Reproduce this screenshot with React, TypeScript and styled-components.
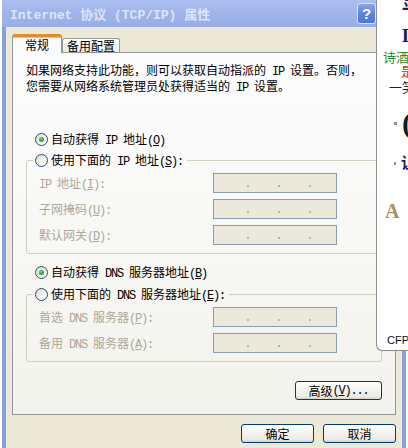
import React from 'react';
import styled, { createGlobalStyle, css } from 'styled-components';

const GlobalStyle = createGlobalStyle`
  html, body { margin: 0; padding: 0; background: #fff; }
  body {
    font-family: "Noto Sans CJK SC", "Noto Sans", sans-serif;
    font-size: 12px;
    color: #000;
  }
  * { box-sizing: border-box; }
`;

const Screen = styled.div`
  position: relative;
  width: 408px;
  height: 448px;
  overflow: hidden;
  padding-left: 2px;
  background: #fff;
`;

const Dialog = styled.div`
  width: 404px;
  display: flex;
  flex-direction: column;
`;

const TitleBar = styled.div`
  height: 27px;
  display: flex;
  align-items: center;
  padding: 0 5px 0 8px;
  background: linear-gradient(180deg, #abc0f0 0%, #9fb5ea 45%, #98aee6 100%);
`;

const Title = styled.span`
  flex: 1;
  font: bold 13px "Liberation Mono", "Noto Sans CJK SC", monospace;
  color: #dbe4f9;
  white-space: nowrap;
`;

const CapButton = styled.span<{ $w: number }>`
  width: ${p => p.$w}px;
  height: 21px;
  margin-left: 4px;
  border: 1px solid #dbe4f8;
  border-radius: 3px;
  background: linear-gradient(180deg, #86a5ea 0%, #5b82dc 55%, #4f76d6 100%);
  color: #fff;
  font: bold 15px "Liberation Sans", sans-serif;
  display: flex;
  align-items: center;
  justify-content: center;
`;

const Frame = styled.div`
  background: #ece9d8;
  border: 4px solid #8a9edb;
  border-top: none;
  padding: 7px 6px 5px;
`;

const TabRow = styled.div`
  position: relative;
  z-index: 1;
  display: flex;
  align-items: flex-end;
  height: 19px;
  margin-bottom: -1px;
`;

const Tab = styled.div<{ $active?: boolean }>`
  display: flex;
  align-items: center;
  justify-content: center;
  border: 1px solid #919b9c;
  border-bottom: none;
  border-radius: 3px 3px 0 0;
  white-space: nowrap;
  ${p => p.$active
    ? css`
      width: 50px;
      height: 19px;
      padding-bottom: 2px;
      background: #fcfcfe;
      border-top: 3px solid #e68b2c;
      box-shadow: inset 0 1px 0 #ffc83c;
    `
    : css`
      width: 58px;
      height: 14px;
      margin-bottom: 1px;
      background: linear-gradient(180deg, #ffffff 0%, #f3f3ef 60%, #ecebe5 100%);
    `}
`;

const Page = styled.div`
  display: flex;
  flex-direction: column;
  border: 1px solid #919b9c;
  background: linear-gradient(180deg, #fcfcfe 0%, #f8f8f5 50%, #f3f2ec 100%);
  padding: 10px 13px 14px;
`;

const Intro = styled.p`
  margin: 0;
  line-height: 14px;
  white-space: nowrap;
`;

const L = styled.span`
  font-family: "Liberation Mono", monospace;
  font-size: 12px;
  letter-spacing: -1.2px;
`;

const Key = styled.span`
  text-decoration: underline;
`;

const RadioRow = styled.div<{ $mt: number }>`
  display: flex;
  align-items: center;
  height: 16px;
  margin: ${p => p.$mt}px 0 0 9px;
  white-space: nowrap;
`;

const RadioMark = styled.span<{ $on?: boolean }>`
  position: relative;
  flex: none;
  width: 13px;
  height: 13px;
  margin-right: 3px;
  border-radius: 50%;
  border: 1px solid #1c5180;
  background: linear-gradient(135deg, #d8d8d2 0%, #f4f4f1 55%, #ffffff 100%);
  ${p => p.$on && css`
    &::after {
      content: '';
      position: absolute;
      left: 3px;
      top: 3px;
      width: 5px;
      height: 5px;
      border-radius: 50%;
      background: radial-gradient(circle at 40% 35%, #62db5e 0%, #21a121 65%, #1a8a1a 100%);
    }
  `}
`;

const RadioText = styled.span`
  white-space: pre;
`;

const Group = styled.fieldset<{ $mt: number }>`
  margin: ${p => p.$mt}px 0 0;
  padding: 0;
  min-width: 0;
  border: 1px solid #d0d0bf;
  border-radius: 3px;
`;

const Legend = styled.legend`
  display: flex;
  align-items: center;
  height: 16px;
  margin-left: 6px;
  padding: 0 4px 0 2px;
  white-space: nowrap;
`;

const Rows = styled.div`
  display: flex;
  flex-direction: column;
  gap: 6px;
  padding: 5px 12px 8px;
`;

const Row = styled.div`
  display: flex;
  align-items: center;
  height: 20px;
`;

const FieldLabel = styled.span`
  width: 174px;
  color: #aca899;
  white-space: pre;
`;

const IpField = styled.div`
  display: flex;
  align-items: center;
  gap: 29px;
  width: 124px;
  height: 20px;
  padding-left: 33px;
  border: 1px solid #8d9db1;
  background: #ece9dc;
`;

const IpDot = styled.span`
  width: 2px;
  height: 2px;
  margin-top: 5px;
  background: #b9b6aa;
`;

const Button = styled.button<{ $w: number }>`
  width: ${p => p.$w}px;
  height: 19px;
  padding: 0;
  border: 1px solid #003c74;
  border-radius: 3px;
  background: linear-gradient(180deg, #ffffff 0%, #f5f5f1 40%, #ecebe6 85%, #d6d0c5 100%);
  font: 12px "Noto Sans CJK SC", sans-serif;
  color: #000;
  display: flex;
  align-items: center;
  justify-content: center;
  white-space: nowrap;
`;

const AdvancedBar = styled.div`
  display: flex;
  justify-content: flex-end;
  margin-top: 19px;
`;

const Footer = styled.div`
  display: flex;
  justify-content: flex-end;
  gap: 9px;
  margin-top: 9px;
`;

/* web page window lying over the right edge of the dialog */
const Behind = styled.div`
  position: absolute;
  left: 376px;
  top: 0;
  width: 40px;
  height: 351px;
  overflow: hidden;
  background: #fff;
  border-left: 1px solid #8c8c8c;
  border-bottom: 1px solid #8c8c8c;
  border-bottom-left-radius: 6px;
`;

const Frag = styled.div<{ $mt: number; $ml: number }>`
  display: flex;
  align-items: center;
  margin: ${p => p.$mt}px 0 0 ${p => p.$ml}px;
  white-space: nowrap;
`;

const Headline = styled.span<{ $size: number }>`
  font: bold ${p => p.$size}px "Liberation Serif", "Noto Sans CJK SC", serif;
  line-height: ${p => p.$size}px;
  color: #1b1a6a;
`;

const Tagline = styled.span<{ $color: string }>`
  font-size: 13px;
  line-height: 13px;
  color: ${p => p.$color};
`;

const BulletDot = styled.span`
  width: 3px;
  height: 3px;
  margin-right: 5px;
  background: #8f8f8f;
`;

const Paren = styled.span`
  font: bold 30px "Liberation Serif", serif;
  line-height: 34px;
  color: #1a1a1a;
`;

const InitialA = styled.span`
  font: bold 20px "Liberation Serif", serif;
  line-height: 20px;
  color: #a89062;
`;

const Caption = styled.span`
  font: 11px "Liberation Sans", sans-serif;
  line-height: 12px;
  color: #111;
`;

const Radio = ({ on, children }: { on?: boolean; children: React.ReactNode }) => (
  <>
    <RadioMark $on={on} />
    <RadioText>{children}</RadioText>
  </>
);

const IpBox = () => (
  <IpField>
    <IpDot />
    <IpDot />
    <IpDot />
  </IpField>
);

export default function App() {
  return (
    <>
      <GlobalStyle />
      <Screen>
        <Dialog>
          <TitleBar>
            <Title>Internet 协议 (TCP/IP) 属性</Title>
            <CapButton $w={19}>?</CapButton>
            <CapButton $w={21}>×</CapButton>
          </TitleBar>
          <Frame>
            <TabRow>
              <Tab $active>常规</Tab>
              <Tab>备用配置</Tab>
            </TabRow>
            <Page>
              <Intro>
                如果网络支持此功能，则可以获取自动指派的<L> IP </L>设置。否则，
                <br />
                您需要从网络系统管理员处获得适当的<L> IP </L>设置。
              </Intro>

              <RadioRow $mt={36}>
                <Radio on>自动获得<L> IP </L>地址<L>(<Key>O</Key>)</L></Radio>
              </RadioRow>
              <Group $mt={5}>
                <Legend>
                  <Radio>使用下面的<L> IP </L>地址<L>(<Key>S</Key>):</L></Radio>
                </Legend>
                <Rows>
                  <Row>
                    <FieldLabel><L>IP </L>地址<L>(<Key>I</Key>):</L></FieldLabel>
                    <IpBox />
                  </Row>
                  <Row>
                    <FieldLabel>子网掩码<L>(<Key>U</Key>):</L></FieldLabel>
                    <IpBox />
                  </Row>
                  <Row>
                    <FieldLabel>默认网关<L>(<Key>D</Key>):</L></FieldLabel>
                    <IpBox />
                  </Row>
                </Rows>
              </Group>

              <RadioRow $mt={10}>
                <Radio on>自动获得<L> DNS </L>服务器地址<L>(<Key>B</Key>)</L></Radio>
              </RadioRow>
              <Group $mt={6}>
                <Legend>
                  <Radio>使用下面的<L> DNS </L>服务器地址<L>(<Key>E</Key>):</L></Radio>
                </Legend>
                <Rows>
                  <Row>
                    <FieldLabel>首选<L> DNS </L>服务器<L>(<Key>P</Key>):</L></FieldLabel>
                    <IpBox />
                  </Row>
                  <Row>
                    <FieldLabel>备用<L> DNS </L>服务器<L>(<Key>A</Key>):</L></FieldLabel>
                    <IpBox />
                  </Row>
                </Rows>
              </Group>

              <AdvancedBar>
                <Button $w={87}>高级<L>(<Key>V</Key>)...</L></Button>
              </AdvancedBar>
            </Page>
            <Footer>
              <Button $w={73}>确定</Button>
              <Button $w={73}>取消</Button>
            </Footer>
          </Frame>
        </Dialog>

        <Behind>
          <Frag $mt={-8} $ml={25}><Headline $size={20}>显</Headline></Frag>
          <Frag $mt={14} $ml={25}><Headline $size={19}>D</Headline></Frag>
          <Frag $mt={5} $ml={6}><Tagline $color="#2b8a2b">诗酒</Tagline></Frag>
          <Frag $mt={1} $ml={24}><Tagline $color="#b8361f">是</Tagline></Frag>
          <Frag $mt={3} $ml={12}><Tagline $color="#222">一笑</Tagline></Frag>
          <Frag $mt={13} $ml={17}><BulletDot /><Paren>(</Paren></Frag>
          <Frag $mt={16} $ml={17}><BulletDot /><Headline $size={15}>让</Headline></Frag>
          <Frag $mt={30} $ml={8}><InitialA>A</InitialA></Frag>
          <Frag $mt={113} $ml={10}><Caption>CFPL</Caption></Frag>
        </Behind>
      </Screen>
    </>
  );
}
